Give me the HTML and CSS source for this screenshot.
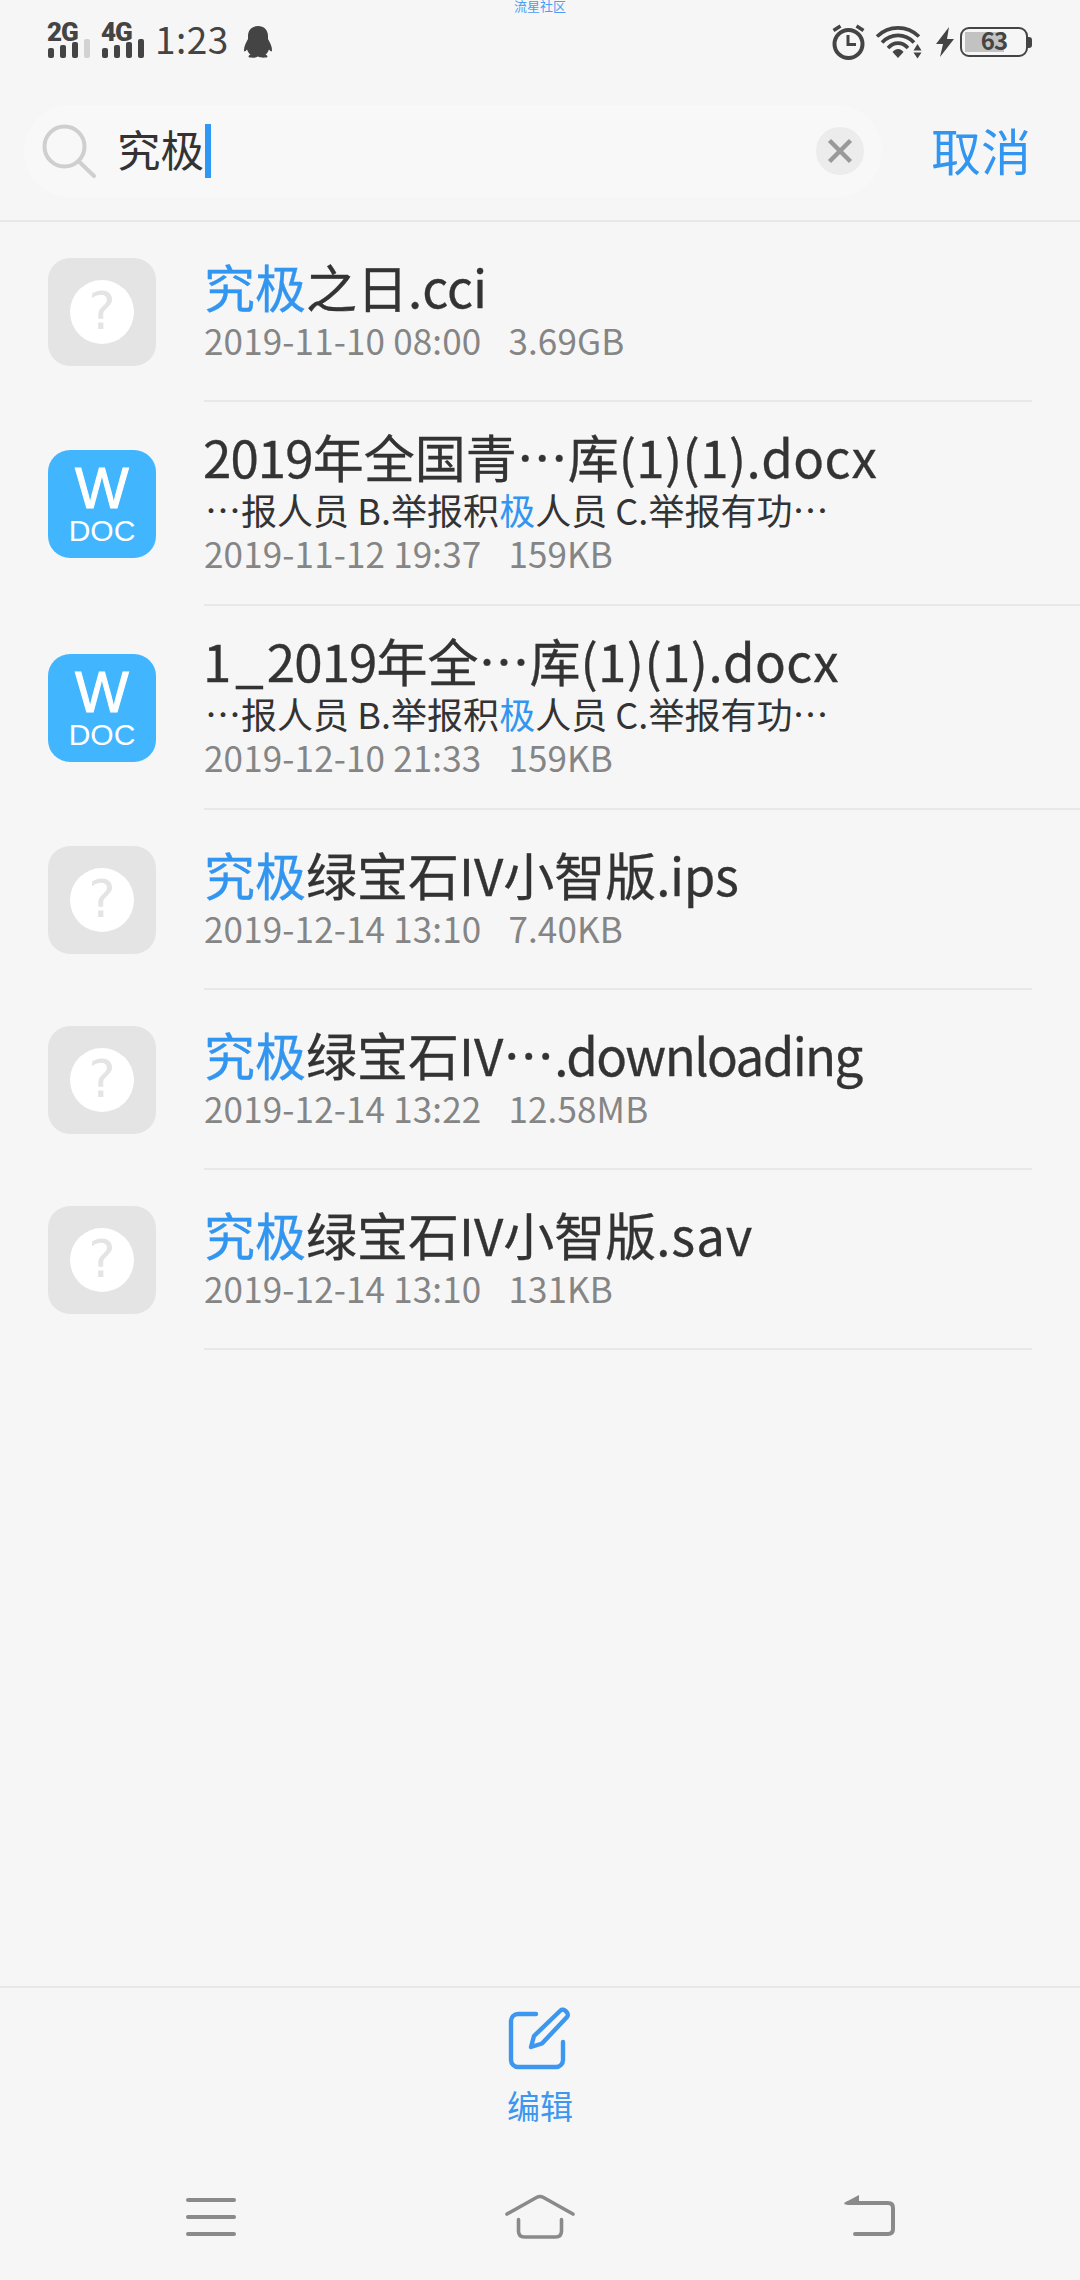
FILE: index.html
```html
<!DOCTYPE html>
<html lang="zh-CN">
<head>
  <meta charset="UTF-8" />
  <meta name="viewport" content="width=device-width, initial-scale=1.0" />
  <title>文件搜索</title>
  <link rel="stylesheet" href="styles.css">
</head>
<body>

<div class="watermark">流星社区</div>

<div class="status-bar">
  <div class="signal">
    <span>2G</span>
    <svg width="42" height="20" viewBox="0 0 42 20" fill="#444">
      <rect x="0" y="9" width="6" height="10" rx="2" />
      <rect x="12" y="6" width="6" height="13" rx="2" />
      <rect x="24" y="3" width="6" height="16" rx="2" />
      <rect x="36" y="0" width="6" height="19" rx="2" fill="#d2d2d2" />
    </svg>
  </div>
  <div class="signal">
    <span>4G</span>
    <svg width="42" height="20" viewBox="0 0 42 20" fill="#444">
      <rect x="0" y="9" width="6" height="10" rx="2" />
      <rect x="12" y="6" width="6" height="13" rx="2" />
      <rect x="24" y="3" width="6" height="16" rx="2" />
      <rect x="36" y="0" width="6" height="19" rx="2" />
    </svg>
  </div>
  <div class="clock">1:23</div>
  <svg class="qq" width="28" height="34" viewBox="0 0 28 34" fill="#444">
    <path d="M14 1C8 1 4 5 4 11v3C2 18 0 21 0 25c0 2 1 2 3-.5.8 2.200 2 4 3.500 5.200C4 30.500 4 32.500 6 32.600c3 .3 6 .2 8-1 2 1.200 5 1.300 8 1 2-.1 2-2.100-.5-2.900C23 28.500 24.200 26.700 25 24.500c2 2.500 3 2.500 3 .5 0-4-2-7-4-11v-3C24 5 20 1 14 1z" />
  </svg>

  <div class="status-right">
    <svg width="34" height="38" viewBox="0 0 34 38" fill="none" stroke="#444">
      <circle cx="16.500" cy="21" r="14" stroke-width="4" />
      <path d="M16 12v9.500h8" stroke-width="3" />
      <path d="M1.500 7.500l7-4.500M24.500 3l7 4.500" stroke-width="3.500" />
    </svg>
    <svg class="wifi" width="48" height="36" viewBox="0 0 48 36" fill="none" stroke="#444" stroke-width="3.600">
      <path d="M2 12.500c12-11.500 30-11.500 42 0" />
      <path d="M7 18.500c9-9.500 23-9.500 32 0" />
      <path d="M13 24c6-6.500 14-6.500 20 0" />
      <path d="M17.500 28c3.500-4 8-4 11 0L23 34z" fill="#444" stroke="none" />
      <path d="M42.500 20l4 6.500h-8zM42.500 34.500l4-6h-8z" fill="#444" stroke="none" />
    </svg>
    <svg class="bolt" width="20" height="30" viewBox="0 0 20 30" fill="#444">
      <path d="M14 0L1 17h7L5 30 19 12h-7z" />
    </svg>
    <div class="battery"><span>63</span></div>
  </div>
</div>

<div class="search-bar">
  <div class="search-input">
    <svg class="search-icon" width="56" height="56" viewBox="0 0 56 56" fill="none" stroke="#cfcfcf" stroke-width="4" stroke-linecap="round">
      <circle cx="23.500" cy="23.500" r="20" />
      <path d="M38.500 39L53 53" />
    </svg>
    <span class="search-text">究极</span>
    <span class="caret"></span>
    <svg class="clear" width="48" height="48" viewBox="0 0 48 48">
      <circle cx="24" cy="24" r="24" fill="#ececec" />
      <path d="M13.500 13.500l21 21M34.500 13.500l-21 21" stroke="#999" stroke-width="4.500" />
    </svg>
  </div>
  <a class="cancel">取消</a>
</div>

<div class="file-list">
  <div class="file">
    <div class="tile unknown"><span>?</span></div>
    <div class="info">
      <div class="name"><b>究极</b>之日.cci</div>
      <div class="meta"><span>2019-11-10 08:00</span><span>3.69GB</span></div>
    </div>
  </div>
  <div class="file tall">
    <div class="tile doc"><span class="w">W</span><span class="ext">DOC</span></div>
    <div class="info">
      <div class="name"><span class="year">2019</span>年全国青⋯库<span class="tail">(1)(1).docx</span></div>
      <div class="snippet">⋯报人员 B.举报积<b>极</b>人员 C.举报有功⋯</div>
      <div class="meta"><span>2019-11-12 19:37</span><span>159KB</span></div>
    </div>
  </div>
  <div class="file tall">
    <div class="tile doc"><span class="w">W</span><span class="ext">DOC</span></div>
    <div class="info">
      <div class="name"><span class="prefix">1_</span><span class="year">2019</span>年全⋯库<span class="tail">(1)(1).docx</span></div>
      <div class="snippet">⋯报人员 B.举报积<b>极</b>人员 C.举报有功⋯</div>
      <div class="meta"><span>2019-12-10 21:33</span><span>159KB</span></div>
    </div>
  </div>
  <div class="file">
    <div class="tile unknown"><span>?</span></div>
    <div class="info">
      <div class="name"><b>究极</b>绿宝石IV小智版<span class="ips">.ips</span></div>
      <div class="meta"><span>2019-12-14 13:10</span><span>7.40KB</span></div>
    </div>
  </div>
  <div class="file">
    <div class="tile unknown"><span>?</span></div>
    <div class="info">
      <div class="name"><b>究极</b>绿宝石IV⋯<span class="downloading">.downloading</span></div>
      <div class="meta"><span>2019-12-14 13:22</span><span>12.58MB</span></div>
    </div>
  </div>
  <div class="file">
    <div class="tile unknown"><span>?</span></div>
    <div class="info">
      <div class="name"><b>究极</b>绿宝石IV小智版<span class="sav">.sav</span></div>
      <div class="meta"><span>2019-12-14 13:10</span><span>131KB</span></div>
    </div>
  </div>
</div>

<div class="toolbar">
  <svg width="64" height="64" viewBox="0 0 64 64" fill="none" stroke="#3d97ee" stroke-width="4.400" stroke-linecap="round" stroke-linejoin="round">
    <path d="M28 8H10a7 7 0 0 0-7 7V54a7 7 0 0 0 7 7H48a7 7 0 0 0 7-7V36" />
    <path d="M23 41l3-11L52.500 4.500c3-3 9.500 3 6.500 6.500L34 37.500z" />
  </svg>
  <span>编辑</span>
</div>

<div class="nav-bar">
  <svg width="50" height="48" viewBox="0 0 50 48" fill="none" stroke="#8a8a8a" stroke-width="4" stroke-linecap="round">
    <path d="M2 7h46M2 24h46M2 41h46" />
  </svg>
  <svg width="70" height="48" viewBox="0 0 70 48" fill="none" stroke="#8a8a8a" stroke-width="3.600" stroke-linecap="round" stroke-linejoin="round">
    <path d="M2 21L31.500 4.500q3.500-2 7 0L68 21M13.500 26.500V38q0 6 6 6h31q6 0 6-6V26.500" />
  </svg>
  <svg width="52" height="48" viewBox="0 0 52 48" fill="none" stroke="#8a8a8a" stroke-width="4" stroke-linecap="round">
    <path d="M4 10h40q5 0 5 5v21q0 5-5 5H11" />
    <path d="M0 10L15 2v9.500H1z" fill="#8a8a8a" stroke="none" />
  </svg>
</div>

</body>
</html>
```
FILE: styles.css
```css
:root {
  --blue: #3296f0;
  --bg: #f6f6f6;
  --line: #e8e8e8;
  --text: #333;
  --grey: #858585;
}
* {
  box-sizing: border-box;
}
body {
  margin: 0;
  width: 1080px;
  height: 2280px;
  display: flex;
  flex-direction: column;
  background: var(--bg);
  color: var(--text);
  font-family: "Noto Sans CJK SC", "Noto Sans", sans-serif;
  overflow: hidden;
}
svg {
  display: block;
  flex: none;
}
b {
  font-weight: normal;
  color: var(--blue);
}

/* status bar */
.watermark {
  position: absolute;
  top: -3px;
  left: 0;
  width: 1080px;
  text-align: center;
  font-size: 13px;
  line-height: 18px;
  color: #4d9df0;
}
.status-bar {
  display: flex;
  height: 84px;
  padding: 0 48px;
  color: #444;
}
.signal {
  width: 42px;
  margin-right: 12px;
  padding-top: 20px;
}
.signal span {
  display: block;
  height: 19px;
  margin-left: -1px;
  font: 900 26px/24px Roboto, sans-serif;
  letter-spacing: -1px;
}
.clock {
  width: 75px;
  margin-left: -1px;
  font-size: 37px;
  line-height: 77px;
  letter-spacing: 0.5px;
}
.qq {
  margin: 25px 0 0 14px;
}
.status-right {
  display: flex;
  margin-left: auto;
  padding-top: 23px;
}
.wifi {
  margin: 1px 0 0 9px;
}
.bolt {
  margin: 4px 0 0 12px;
}
.battery {
  position: relative;
  width: 68px;
  height: 30px;
  margin: 4px 4px 0 5px;
  padding: 3px;
  border: 2px solid #444;
  border-radius: 9px;
  background: linear-gradient(#c2c2c2, #c2c2c2) 3px 3px / 39px 20px no-repeat;
  font-size: 24px;
  font-weight: 700;
  line-height: 15px;
  letter-spacing: -1px;
  text-align: center;
}
.battery::after {
  content: "";
  position: absolute;
  right: -6px;
  top: 8px;
  width: 4px;
  height: 11px;
  border-radius: 0 3px 3px 0;
  background: #444;
}

/* search */
.search-bar {
  display: flex;
  align-items: center;
  height: 138px;
  padding: 0 49px 2px 24px;
  border-bottom: 2px solid var(--line);
}
.search-input {
  display: flex;
  align-items: center;
  width: 858px;
  height: 92px;
  padding: 0 18px 0 17px;
  border-radius: 46px;
  background: #f8f8f8;
}
.search-text {
  margin: 0 1px 4px 20px;
  font-size: 43.500px;
  line-height: 60px;
}
.caret {
  width: 6px;
  height: 54px;
  background: #2f97f4;
}
.clear {
  margin-left: auto;
}
.cancel {
  margin: 0 0 4px auto;
  color: var(--blue);
  font-size: 50px;
  line-height: 70px;
}

/* results */
.file {
  display: flex;
  height: 180px;
  padding: 0 48px;
}
.file.tall {
  height: 204px;
  padding-right: 0;
}
.tile {
  width: 108px;
  height: 108px;
  margin: 36px 48px 0 0;
  border-radius: 22px;
  flex: none;
}
.unknown {
  background: #e4e4e4;
  padding: 22px;
}
.unknown span {
  display: block;
  width: 64px;
  height: 64px;
  border-radius: 50%;
  background: #fff;
  color: #e4e4e4;
  font-family: "DejaVu Sans", sans-serif;
  font-size: 51px;
  line-height: 64px;
  text-align: center;
}
.doc {
  margin-top: 48px;
  padding-top: 8px;
  background: #41b6fe;
  color: #fff;
  font-family: "Liberation Sans", sans-serif;
  text-align: center;
}
.doc span {
  display: block;
}
.doc .w {
  font-size: 57px;
  line-height: 60px;
  height: 56px;
  -webkit-text-stroke: 1px #fff;
}
.doc .ext {
  font-size: 30px;
  line-height: 34px;
}
.info {
  flex: 1;
  padding-top: 34px;
  border-bottom: 2px solid var(--line);
  white-space: nowrap;
}
.tall .info {
  padding-top: 24px;
}
.name {
  font-size: 51px;
  line-height: 60px;
  -webkit-text-stroke: 0.3px;
}
.year {
  letter-spacing: -0.9px;
  margin-left: -1px;
}
.prefix {
  letter-spacing: 4px;
  margin-left: -1px;
}
.tail {
  letter-spacing: 0.4px;
}
.ips {
  letter-spacing: -0.4px;
}
.sav {
  letter-spacing: 0.9px;
}
.downloading {
  letter-spacing: -1.6px;
}
.snippet {
  padding-left: 1px;
  font-size: 36px;
  line-height: 47px;
  letter-spacing: 0.04px;
}
.meta {
  display: flex;
  gap: 27px;
  color: var(--grey);
  font-size: 35px;
  line-height: 48px;
  letter-spacing: 0.15px;
}
.tall .meta {
  line-height: 40px;
}

/* bottom */
.toolbar {
  display: flex;
  flex-direction: column;
  align-items: center;
  margin-top: auto;
  height: 174px;
  padding-top: 18px;
  border-top: 2px solid var(--line);
  color: #3d97ee;
}
.toolbar span {
  margin-top: 10px;
  font-size: 33px;
  line-height: 50px;
}
.nav-bar {
  display: flex;
  justify-content: space-between;
  height: 120px;
  padding: 33px 184px 0 186px;
}
```
